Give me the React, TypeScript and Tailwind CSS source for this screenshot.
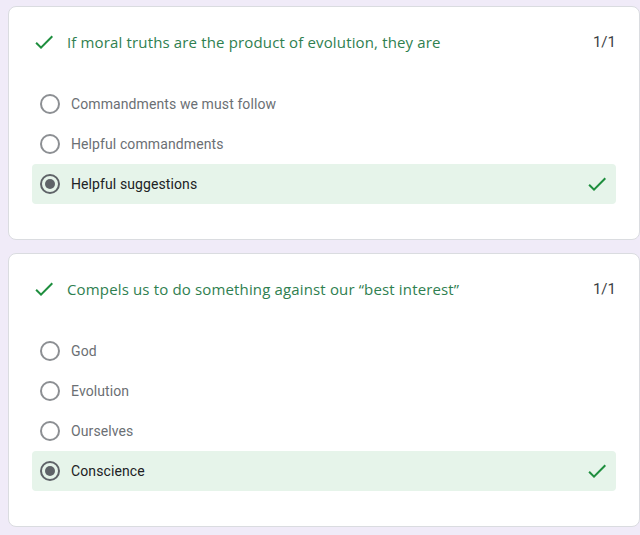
type Question = {
  title: string;
  score: string;
  options: string[];
  answer: string;
};

const questions: Question[] = [
  {
    title: "If moral truths are the product of evolution, they are",
    score: "1/1",
    options: ["Commandments we must follow", "Helpful commandments", "Helpful suggestions"],
    answer: "Helpful suggestions",
  },
  {
    title: "Compels us to do something against our \u201cbest interest\u201d",
    score: "1/1",
    options: ["God", "Evolution", "Ourselves", "Conscience"],
    answer: "Conscience",
  },
];

function Check({ className }: { className?: string }) {
  return (
    <svg viewBox="0 0 24 24" className={className} fill="currentColor">
      <path d="M9 16.17 4.83 12l-1.42 1.41L9 19 21 7l-1.41-1.41z" />
    </svg>
  );
}

function Radio({ checked }: { checked: boolean }) {
  if (checked) {
    return (
      <div className="w-5 h-5 rounded-full border-2 border-[#5f6368] flex items-center justify-center shrink-0">
        <div className="w-[10px] h-[10px] rounded-full bg-[#5f6368]" />
      </div>
    );
  }
  return <div className="w-5 h-5 rounded-full border-2 border-[#8c8f93] shrink-0" />;
}

function QuestionCard({ q }: { q: Question }) {
  return (
    <div className="bg-white border border-[#dadce0] rounded-lg pt-[23px] pb-[35px] px-[23px]">
      <div className="flex items-center h-6">
        <Check className="w-6 h-6 text-[#1e8e3e] shrink-0" />
        <div className="ml-[11px] flex-1 text-[15px] text-[#2f8050] font-['Open_Sans',sans-serif] tracking-[0.15px]">
          {q.title}
        </div>
        <div className="text-[15px] text-[#3c4043] font-['Roboto',sans-serif]">{q.score}</div>
      </div>
      <div className="mt-[30px]">
        {q.options.map((opt) => {
          const picked = opt === q.answer;
          return (
            <div
              key={opt}
              className={
                picked
                  ? "flex items-center h-10 pl-[8px] pr-[7px] rounded bg-[#e6f4ea]"
                  : "flex items-center h-10 pl-[8px] pr-[7px]"
              }
            >
              <Radio checked={picked} />
              <span
                className={
                  picked
                    ? "ml-[11px] flex-1 text-sm text-[#202124] font-['Roboto',sans-serif] tracking-[0.1px]"
                    : "ml-[11px] flex-1 text-sm text-[#6b6f74] font-['Roboto',sans-serif] tracking-[0.1px]"
                }
              >
                {opt}
              </span>
              {picked && <Check className="w-6 h-6 text-[#1e8e3e]" />}
            </div>
          );
        })}
      </div>
    </div>
  );
}

export default function App() {
  return (
    <div className="min-h-screen bg-[#f0ebf8] pl-2 pt-[6px] flex flex-col gap-[13px]">
      {questions.map((q) => (
        <QuestionCard key={q.title} q={q} />
      ))}
    </div>
  );
}
